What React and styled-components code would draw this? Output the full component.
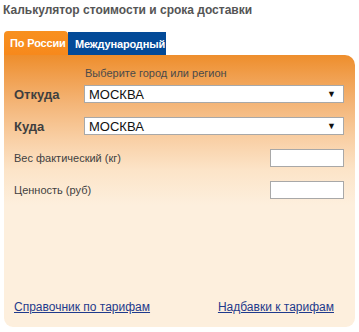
import React from "react";
import styled, { createGlobalStyle } from "styled-components";

const Global = createGlobalStyle`
  html, body { margin: 0; padding: 0; background: #fff; }
  body { font-family: "Liberation Sans", Arial, sans-serif; }
`;

const Wrap = styled.div`
  width: 359px;
  padding: 3px 0 0 4px;
  box-sizing: border-box;
`;

const Title = styled.div`
  font-size: 12px;
  font-weight: bold;
  color: #555;
  line-height: 14px;
  margin-left: -1px;
  margin-bottom: 14px;
`;

const Tabs = styled.div`
  display: flex;
  align-items: flex-end;
  height: 24px;
`;

const Tab = styled.div`
  flex: 0 0 ${(p) => p.$w}px;
  height: ${(p) => (p.$active ? 24 : 23)}px;
  box-sizing: border-box;
  padding-left: ${(p) => (p.$active ? 6 : 7)}px;
  display: flex;
  align-items: center;
  white-space: nowrap;
  font-size: 11px;
  font-weight: bold;
  letter-spacing: -0.15px;
  color: #fff;
  background: ${(p) => (p.$active ? "linear-gradient(#f8901f, #f7891c)" : "#034a98")};
  border-radius: ${(p) => (p.$active ? "4px 4px 0 0" : "0")};
`;

const Panel = styled.div`
  width: 351px;
  height: 272px;
  box-sizing: border-box;
  padding: 11px 11px 13px 10px;
  border-radius: 0 10px 9px 9px;
  background: linear-gradient(
    #ee8e2c 0px,
    #f1a254 25px,
    #f4b679 50px,
    #f9d0a6 85px,
    #fce4c8 115px,
    #fdefdd 150px,
    #fdefdd 100%
  );
  display: flex;
  flex-direction: column;
`;

const Hint = styled.div`
  font-size: 11px;
  line-height: 14px;
  color: #4a4a4a;
  margin-left: 71px;
  margin-bottom: 5px;
`;

const Rows = styled.div`
  display: flex;
  flex-direction: column;
  gap: 14px;
`;

const Row = styled.div`
  display: flex;
  align-items: center;
  justify-content: space-between;
  height: 18px;
`;

const Label = styled.div`
  width: 70px;
  font-size: ${(p) => (p.$big ? 13 : 11)}px;
  font-weight: ${(p) => (p.$big ? "bold" : "normal")};
  color: #3f3f3f;
  white-space: nowrap;
`;

const SelectBox = styled.div`
  width: 260px;
  height: 18px;
  box-sizing: border-box;
  background: #fff;
  border: 1px solid #a8a8a8;
  display: flex;
  align-items: center;
  justify-content: space-between;
  padding: 0 7px 0 4px;
  font-size: 13px;
  color: #111;
`;

const Arrow = styled.span`
  font-size: 9px;
  color: #111;
`;

const Input = styled.input`
  width: 74px;
  height: 18px;
  box-sizing: border-box;
  border: 1px solid #a8a8a8;
  background: #fff;
  padding: 0 3px;
  margin: 0;
  outline: none;
`;

const Links = styled.div`
  margin-top: auto;
  display: flex;
  justify-content: space-between;
  padding-right: 10px;
`;

const Link = styled.a`
  font-size: 12px;
  line-height: 14px;
  color: #1f3a8c;
  text-decoration: underline;
  cursor: pointer;
`;

const Select = ({ value }) => (
  <SelectBox>
    <span>{value}</span>
    <Arrow>▼</Arrow>
  </SelectBox>
);

export default function App() {
  return (
    <Wrap>
      <Global />
      <Title>Калькулятор стоимости и срока доставки</Title>
      <Tabs>
        <Tab $active $w={64}>По России</Tab>
        <Tab $w={98}>Международный</Tab>
      </Tabs>
      <Panel>
        <Hint>Выберите город или регион</Hint>
        <Rows>
          <Row>
            <Label $big>Откуда</Label>
            <Select value="МОСКВА" />
          </Row>
          <Row>
            <Label $big>Куда</Label>
            <Select value="МОСКВА" />
          </Row>
          <Row>
            <Label>Вес фактический (кг)</Label>
            <Input />
          </Row>
          <Row>
            <Label>Ценность (руб)</Label>
            <Input />
          </Row>
        </Rows>
        <Links>
          <Link>Справочник по тарифам</Link>
          <Link>Надбавки к тарифам</Link>
        </Links>
      </Panel>
    </Wrap>
  );
}
